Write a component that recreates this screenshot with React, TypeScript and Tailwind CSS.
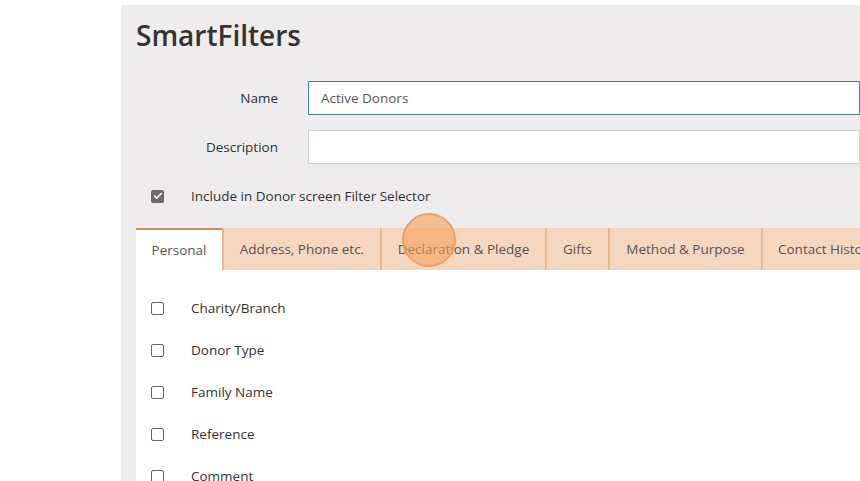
import { Check } from "lucide-react";

const tabs = [
  { label: "Personal", w: "w-[86px]" },
  { label: "Address, Phone etc.", w: "w-[158px]" },
  { label: "Declaration & Pledge", w: "w-[165px]" },
  { label: "Gifts", w: "w-[63px]" },
  { label: "Method & Purpose", w: "w-[153px]" },
];

const fields = ["Charity/Branch", "Donor Type", "Family Name", "Reference", "Comment", "Title"];

export default function App() {
  return (
    <div className="relative h-[481px] w-[860px] overflow-hidden bg-white font-['Open_Sans',sans-serif] text-[13.5px] text-[#333]">
      <div className="ml-[121px] mt-[5px] h-[476px] bg-[#eeeced] pl-[15px]">
        <h1 className="pt-[13px] text-[28px] font-semibold leading-[34px] text-[#333]">SmartFilters</h1>

        <div className="mt-[29px] flex items-center">
          <label className="w-[142px] text-right font-medium text-[#333]">Name</label>
          <input
            defaultValue="Active Donors"
            className="ml-[30px] h-[34px] flex-1 border border-[#4e7f9c] bg-white px-3 text-[13.5px] text-[#555] outline-none"
          />
        </div>

        <div className="mt-[15px] flex items-center">
          <label className="w-[142px] text-right font-medium text-[#333]">Description</label>
          <input className="ml-[30px] h-[34px] flex-1 border border-[#cfcfcf] bg-white px-3 outline-none" />
        </div>

        <div className="mt-[20px] flex h-[24px] items-center">
          <span className="ml-[15px] flex h-[13px] w-[13px] items-center justify-center rounded-[2px] bg-[#6b6b6b]">
            <Check className="h-[10px] w-[10px] text-white" strokeWidth={4} />
          </span>
          <span className="ml-[27px] text-[#333]">Include in Donor screen Filter Selector</span>
        </div>

        <div className="mt-[20px] flex h-[42px]">
          {tabs.map((t, i) =>
            i === 0 ? (
              <div
                key={t.label}
                className={`${t.w} flex shrink-0 items-center justify-center border-t-2 border-[#c98f5f] bg-white text-[#555]`}
              >
                {t.label}
              </div>
            ) : (
              <div
                key={t.label}
                className={`${t.w} flex shrink-0 items-center justify-center whitespace-nowrap border-l-2 border-[#e8b891] bg-[#f5d6be] text-[#555]`}
              >
                {t.label}
              </div>
            )
          )}
          <div className="flex flex-1 items-center whitespace-nowrap border-l-2 border-[#e8b891] bg-[#f5d6be] pl-[15px] text-[#555]">
            Contact History
          </div>
        </div>

        <div className="flex flex-col bg-white pt-[17px]">
          {fields.map((f) => (
            <div key={f} className="flex h-[42px] items-center">
              <span className="ml-[15px] h-[13px] w-[13px] rounded-[2px] border border-[#666] bg-white" />
              <span className="ml-[27px] text-[#333]">{f}</span>
            </div>
          ))}
        </div>
      </div>

      <div className="absolute left-[402px] top-[213px] h-[54px] w-[54px] rounded-full border-2 border-[#f0a060] bg-[#f5a05a]/60" />
    </div>
  );
}
